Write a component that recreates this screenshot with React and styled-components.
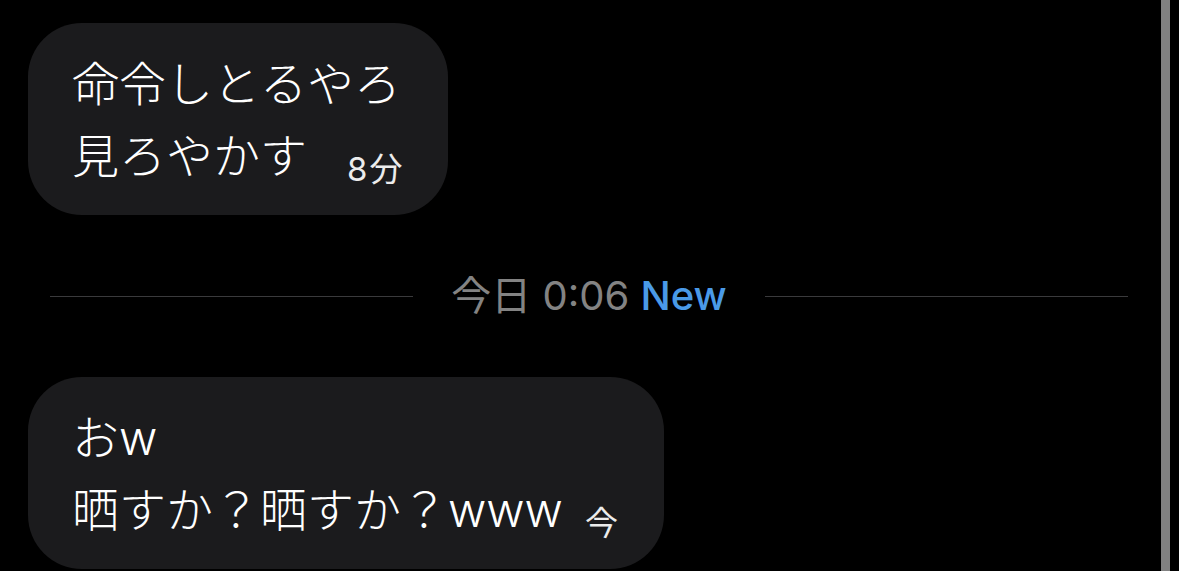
import React from "react";
import styled, { createGlobalStyle } from "styled-components";

const Global = createGlobalStyle`
  html, body {
    margin: 0;
    padding: 0;
    background: #000;
    overflow: hidden;
  }
  body {
    font-family: "Inter", "Noto Sans CJK JP", sans-serif;
  }
`;

const Screen = styled.div`
  display: flex;
  width: 1179px;
  height: 571px;
  background: #000;
  overflow: hidden;
`;

const Thread = styled.div`
  flex: 1;
  display: flex;
  flex-direction: column;
  align-items: flex-start;
  padding: 23px 0 0 28px;
`;

const Bubble = styled.div`
  display: inline-flex;
  flex-direction: column;
  background: #1b1b1d;
  border-radius: 54px;
  padding: 25px 44px 23px 44px;
  color: #fff;
  font-family: "Inter", "Noto Sans CJK JP", sans-serif;
  font-size: 47px;
  font-weight: 300;
  line-height: 72px;
  white-space: nowrap;
`;

const Line = styled.div`
  display: block;
`;

const LastLine = styled.div`
  display: flex;
  justify-content: space-between;
  align-items: flex-end;
  gap: ${(p) => p.$gap || 20}px;
`;

const Time = styled.span`
  font-size: 33px;
  font-weight: 400;
  line-height: 1;
  color: #ececec;
  margin-bottom: 6px;
  letter-spacing: 2px;
`;

const DividerRow = styled.div`
  align-self: stretch;
  height: 162px;
  display: flex;
  align-items: center;
  gap: 38px;
  margin-left: 22px;
  margin-right: 33px;
`;

const Rule = styled.div`
  flex: 1;
  height: 1px;
  background: #3a3a3c;
`;

const DividerLabel = styled.div`
  font-family: "Inter", "Noto Sans CJK JP", sans-serif;
  font-size: 40px;
  line-height: 1;
  color: #838383;
  white-space: nowrap;
`;

const NewTag = styled.span`
  color: #4a9ae8;
  font-weight: 500;
`;

const ScrollTrack = styled.div`
  width: 9px;
  height: 100%;
  background: #818181;
  margin-right: 9px;
`;

export default function App() {
  return (
    <>
      <Global />
      <Screen>
        <Thread>
          <Bubble>
            <Line>命令しとるやろ</Line>
            <LastLine $gap={40}>
              <span>見ろやかす</span>
              <Time>8分</Time>
            </LastLine>
          </Bubble>
          <DividerRow>
            <Rule />
            <DividerLabel>
              今日 0:06 <NewTag>New</NewTag>
            </DividerLabel>
            <Rule />
          </DividerRow>
          <Bubble>
            <Line>おw</Line>
            <LastLine $gap={22}>
              <span>晒すか？晒すか？www</span>
              <Time>今</Time>
            </LastLine>
          </Bubble>
        </Thread>
        <ScrollTrack />
      </Screen>
    </>
  );
}
